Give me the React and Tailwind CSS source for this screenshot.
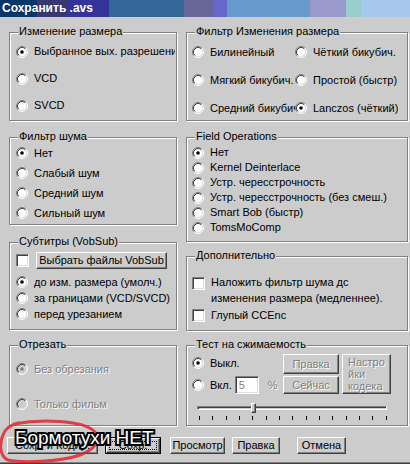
import React from "react";

const raised = "border border-t-white border-l-white border-r-[#404040] border-b-[#404040] shadow-[inset_-1px_-1px_0_#808080] bg-[#cccccc]";
const sunken = "border border-t-[#808080] border-l-[#808080] border-r-white border-b-white shadow-[inset_1px_1px_0_#404040,inset_-1px_-1px_0_#dfdfdf]";
const dim = "text-[#808080] [text-shadow:1px_1px_0_#fff]";

const Radio = ({ checked, disabled }) => (
    <svg width="12" height="12" viewBox="0 0 12 12" className="shrink-0">
        <circle cx="6" cy="6" r="4.5" fill={disabled ? "#cccccc" : "#fff"} />
        <path d="M9.89 2.11A5.5 5.5 0 0 0 2.11 9.89" stroke="#808080" fill="none" />
        <path d="M2.11 9.89A5.5 5.5 0 0 0 9.89 2.11" stroke="#fff" fill="none" />
        <path d="M9.18 2.82A4.5 4.5 0 0 0 2.82 9.18" stroke="#404040" fill="none" />
        <path d="M2.82 9.18A4.5 4.5 0 0 0 9.18 2.82" stroke="#dfdfdf" fill="none" />
        {checked && <circle cx="6" cy="6" r="1.8" fill={disabled ? "#808080" : "#000"} />}
    </svg>
);

const Check = () => <div className={"w-[13px] h-[13px] shrink-0 bg-white " + sunken}></div>;

const Box = ({ title, className, children }) => (
    <div className={"relative border border-[#808080] shadow-[inset_1px_1px_0_#fff,1px_1px_0_#fff] " + className}>
        <span className="absolute left-[8px] -top-[8px] bg-[#cccccc] px-[1px] leading-[13px] whitespace-nowrap">{title}</span>
        {children}
    </div>
);

const Opt = ({ label, checked, disabled, className }) => (
    <div className={"flex items-center gap-[6px] whitespace-nowrap overflow-hidden " + className}>
        <Radio checked={checked} disabled={disabled} />
        <span className={disabled ? dim : ""}>{label}</span>
    </div>
);

const App = () => {

    let titleBlocks = [
        ["w-[37px]", "bg-[#083669]"], ["w-[31px]", "bg-[#383870]"], ["w-[41px]", "bg-[#333399]"],
        ["w-[75px]", "bg-[#336699]"], ["w-[30px]", "bg-[#666699]"], ["w-[13px]", "bg-[#6666cc]"],
        ["w-[83px]", "bg-[#6699cc]"], ["w-[36px]", "bg-[#9999cc]"], ["w-[15px]", "bg-[#99cccc]"],
        ["w-[49px]", "bg-[#a6c8ee]"],
    ];

    return (
        <div className="relative w-[410px] h-[464px] overflow-hidden bg-[#cccccc] text-[11px] text-black font-['Liberation_Sans',Arial,sans-serif]">

            {/* title bar */}
            <div className="relative flex h-[17px]">
                {titleBlocks.map(([w, bg], i) => <div key={i} className={"h-full " + w + " " + bg}></div>)}
                <span className="absolute left-[2px] top-0 leading-[17px] text-[12px] font-bold text-white">Сохранить .avs</span>
            </div>

            <div className="flex pt-[15px] pl-[9px]">

                {/* left column */}
                <div className="w-[168px] flex flex-col">
                    <Box title="Изменение размера" className="h-[89px] pt-[5px] pl-[6px]">
                        <Opt label="Выбранное вых. разрешение" checked className="h-[27px] w-[159px]" />
                        <Opt label="VCD" className="h-[27px]" />
                        <Opt label="SVCD" className="h-[27px]" />
                    </Box>

                    <Box title="Фильтр шума" className="mt-[16px] h-[88px] pt-[5px] pl-[6px]">
                        <Opt label="Нет" checked className="h-[20px]" />
                        <Opt label="Слабый шум" className="h-[20px]" />
                        <Opt label="Средний шум" className="h-[20px]" />
                        <Opt label="Сильный шум" className="h-[20px]" />
                    </Box>

                    <Box title="Субтитры (VobSub)" className="mt-[17px] h-[88px] pt-[9px] pl-[6px]">
                        <div className="flex items-center h-[17px]">
                            <Check />
                            <div className={"ml-[7px] w-[131px] h-[17px] flex items-center justify-center " + raised}>Выбрать файлы VobSub</div>
                        </div>
                        <Opt label="до изм. размера (умолч.)" checked className="mt-[5px] h-[16px]" />
                        <Opt label="за границами (VCD/SVCD)" className="h-[16px]" />
                        <Opt label="перед урезанием" className="h-[16px]" />
                    </Box>

                    <Box title="Отрезать" className="mt-[15px] h-[81px] pt-[13px] pl-[6px]">
                        <Opt label="Без обрезания" checked disabled className="h-[20px]" />
                        <Opt label="Только фильм" disabled className="mt-[15px] h-[20px]" />
                    </Box>
                </div>

                {/* right column */}
                <div className="ml-[9px] w-[222px] flex flex-col">
                    <Box title="Фильтр Изменения размера" className="h-[89px] pt-[5px] pl-[5px]">
                        {[
                            ["Билинейный", false, "Чёткий бикубич.", false],
                            ["Мягкий бикубич.", false, "Простой (быстр)", false],
                            ["Средний бикубич.", false, "Lanczos (чёткий)", true],
                        ].map(([a, ac, b, bc], i) => (
                            <div key={i} className="flex h-[28px]">
                                <Opt label={a} checked={ac} className="w-[103px]" />
                                <Opt label={b} checked={bc} />
                            </div>
                        ))}
                    </Box>

                    <Box title="Field Operations" className="mt-[16px] h-[105px] pt-[7px] pl-[5px]">
                        <Opt label="Нет" checked className="h-[15px]" />
                        <Opt label="Kernel Deinterlace" className="h-[15px]" />
                        <Opt label="Устр. чересстрочность" className="h-[15px]" />
                        <Opt label="Устр. чересстрочность (без смеш.)" className="h-[15px]" />
                        <Opt label="Smart Bob (быстр)" className="h-[15px]" />
                        <Opt label="TomsMoComp" className="h-[15px]" />
                    </Box>

                    <Box title="Дополнительно" className="mt-[14px] h-[75px] pt-[17px] pl-[5px]">
                        <div className="flex items-start gap-[6px]">
                            <div className="mt-[3px]"><Check /></div>
                            <span className="leading-[16px]">Наложить фильтр шума дс<br />изменения размера (медленнее).</span>
                        </div>
                        <div className="flex items-center gap-[6px] mt-[1px] h-[16px]">
                            <Check />
                            <span>Глупый CCEnc</span>
                        </div>
                    </Box>

                    <Box title="Тест на сжимаемость" className="mt-[14px] h-[81px] pt-[8px] pl-[5px]">
                        <div className="flex">
                            <div className="w-[91px] flex flex-col">
                                <Opt label="Выкл." checked className="h-[18px]" />
                                <div className="mt-[4px] h-[18px] flex items-center">
                                    <Opt label="Вкл." />
                                    <div className={"ml-[3px] w-[24px] h-[18px] bg-white pl-[3px] leading-[16px] text-[#808080] " + sunken}>5</div>
                                    <span className={"ml-[9px] " + dim}>%</span>
                                </div>
                            </div>
                            <div className="w-[56px] flex flex-col">
                                <div className={"h-[20px] flex items-center justify-center " + raised}><span className={dim}>Правка</span></div>
                                <div className={"mt-[2px] h-[18px] flex items-center justify-center " + raised}><span className={dim}>Сейчас</span></div>
                            </div>
                            <div className={"ml-[3px] w-[49px] h-[40px] pl-[5px] pt-[1px] leading-[12px] " + raised}>
                                <span className={dim}>Настро<br />йки<br />кодека</span>
                            </div>
                        </div>

                        <div className="relative mt-[12px] ml-[5px] w-[190px]">
                            <div className="h-[4px] border border-t-[#808080] border-l-[#808080] border-r-white border-b-white shadow-[inset_1px_1px_0_#404040]"></div>
                            <div className={"absolute left-[54px] -top-[3px] w-[5px] h-[10px] " + raised}></div>
                            <div className="mt-[6px] ml-[2px] w-[188px] flex justify-between">
                                {Array.from({ length: 15 }).map((_, i) => <div key={i} className="w-[1px] h-[4px] bg-black"></div>)}
                            </div>
                        </div>
                    </Box>
                </div>
            </div>

            {/* dialog buttons */}
            <div className="flex mt-[11px] pl-[7px] h-[17px]">
                <div className={"w-[91px] flex items-center justify-center " + raised}>Сохр. и Кодир.</div>
                <div className="ml-[7px] w-[56px] border border-black">
                    <div className={"relative h-full flex items-center justify-center " + raised}>
                        <div className="absolute inset-[2px] border border-dotted border-black"></div>
                        Сохр.
                    </div>
                </div>
                <div className={"ml-[9px] w-[55px] flex items-center justify-center " + raised}>Просмотр</div>
                <div className={"ml-[7px] w-[48px] flex items-center justify-center " + raised}>Правка</div>
                <div className={"ml-[17px] w-[49px] flex items-center justify-center " + raised}>Отмена</div>
            </div>

            <div className="mt-[8px] h-[1px] bg-[#808080]"></div>
            <div className="h-[1px] bg-[#404040]"></div>

            {/* annotation drawn over the screenshot */}
            <svg className="absolute left-0 top-[416px]" width="104" height="48" viewBox="0 0 104 48">
                <path d="M14 8 C40 3, 82 4, 94 15 C102 23, 96 33, 80 39 C60 46, 22 47, 8 44 C0 41, -1 28, 3 19 C5 13, 9 10, 18 7" stroke="#e0262c" strokeWidth="3" fill="none" strokeLinecap="round" opacity="0.85" />
            </svg>
            <span className="absolute left-[15px] top-[428px] text-[19px] leading-none text-white whitespace-nowrap [-webkit-text-stroke:4px_#000] [paint-order:stroke_fill]">Бормотухи НЕТ</span>
        </div>
    )
}

export default App;
